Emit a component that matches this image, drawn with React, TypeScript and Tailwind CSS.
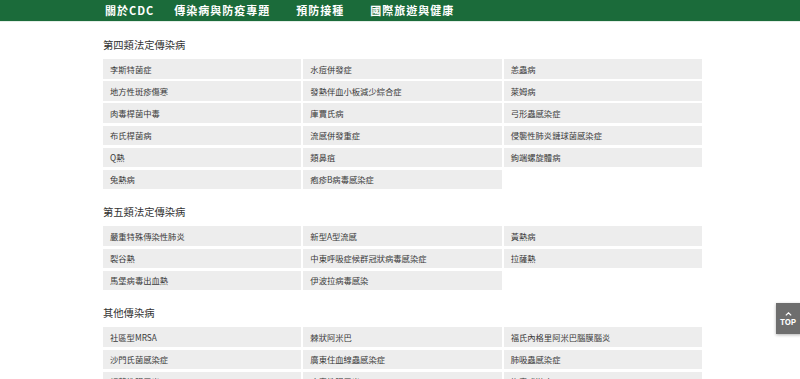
const NAV = [
  { label: "關於CDC", ml: "ml-[105px]" },
  { label: "傳染病與防疫專題", ml: "ml-[20px]" },
  { label: "預防接種", ml: "ml-[26px]" },
  { label: "國際旅遊與健康", ml: "ml-[26px]" },
];

const SECTIONS = [
  {
    title: "第四類法定傳染病",
    items: [
      "李斯特菌症", "水痘併發症", "恙蟲病",
      "地方性斑疹傷寒", "發熱伴血小板減少綜合症", "萊姆病",
      "肉毒桿菌中毒", "庫賈氏病", "弓形蟲感染症",
      "布氏桿菌病", "流感併發重症", "侵襲性肺炎鏈球菌感染症",
      "Q熱", "類鼻疽", "鉤端螺旋體病",
      "兔熱病", "疱疹B病毒感染症",
    ],
  },
  {
    title: "第五類法定傳染病",
    items: [
      "嚴重特殊傳染性肺炎", "新型A型流感", "黃熱病",
      "裂谷熱", "中東呼吸症候群冠狀病毒感染症", "拉薩熱",
      "馬堡病毒出血熱", "伊波拉病毒感染",
    ],
  },
  {
    title: "其他傳染病",
    items: [
      "社區型MRSA", "棘狀阿米巴", "福氏內格里阿米巴腦膜腦炎",
      "沙門氏菌感染症", "廣東住血線蟲感染症", "肺吸蟲感染症",
      "細菌性腸胃炎", "病毒性腸胃炎", "梅毒或淋病",
    ],
  },
];

const FONT = "font-['Noto_Sans_CJK_TC','Noto_Sans',sans-serif]";

export default function App() {
  return (
    <div className={`relative h-[379px] w-[800px] overflow-hidden bg-white ${FONT}`}>
      {/* top nav */}
      <header className="flex h-[22px] items-center bg-[#1b6b3a] border-b border-[#e4eee7]">
        {NAV.map((n) => (
          <span
            key={n.label}
            className={`${n.ml} text-[11px] font-bold leading-none tracking-[1px] text-white`}
          >
            {n.label}
          </span>
        ))}
      </header>

      <main className="pl-[103px] pt-[16px]">
        {SECTIONS.map((s) => (
          <section key={s.title} className="mb-[16px]">
            <h2 className="mb-[7px] text-[10.3px] leading-[14px] text-[#333]">{s.title}</h2>
            <div className="grid w-[599px] grid-cols-3 gap-x-[2px] gap-y-[2.7px]">
              {s.items.map((it) => (
                <div
                  key={it}
                  className="flex h-[19.5px] items-center bg-[#ededed] pl-[7px] text-[8.3px] text-[#3a3a3a]"
                >
                  {it}
                </div>
              ))}
            </div>
          </section>
        ))}
      </main>

      {/* back to top */}
      <div className="absolute left-[776px] top-[303px] flex h-[31px] w-[26px] flex-col items-center justify-center bg-[#6e6e6e] pr-[2px] shadow-[0_1px_3px_rgba(0,0,0,0.3)]">
        <svg width="7" height="4" viewBox="0 0 7 4" fill="none">
          <path d="M0.8 3.4 3.5 0.8 6.2 3.4" stroke="white" strokeWidth="1.2" />
        </svg>
        <span className="mt-[2px] text-[8px] font-bold leading-none text-white">TOP</span>
      </div>
    </div>
  );
}
